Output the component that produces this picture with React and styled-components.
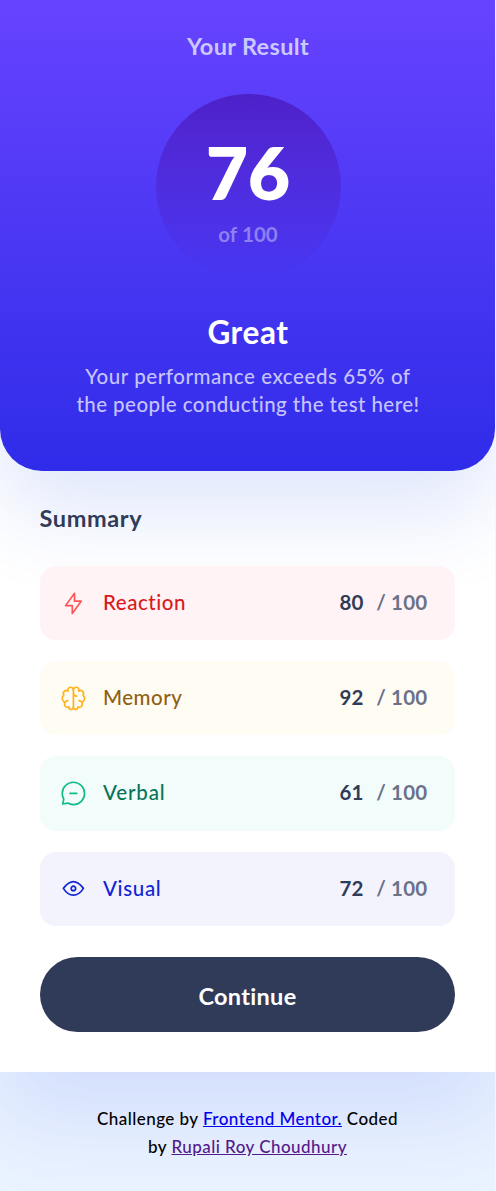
import React from "react";
import styled, { createGlobalStyle } from "styled-components";

const GlobalStyle = createGlobalStyle`
  * { box-sizing: border-box; }
  body {
    margin: 0;
    background: #f3f4ff;
    font-family: Lato, "Liberation Sans", sans-serif;
    font-variant-ligatures: none;
  }
  h1, h2, h3, p, ul { margin: 0; padding: 0; }
`;

const Page = styled.div`
  height: 1191px;
  margin-right: 1px;
  overflow: hidden;
  background: #eaf3ff;
`;

const Card = styled.main`
  height: 1071.6px;
  background: #fff;
  box-shadow: 0 42px 84px rgba(61, 88, 236, 0.14);
`;

const Result = styled.section`
  height: 471.2px;
  display: flex;
  flex-direction: column;
  align-items: center;
  padding: 31px 0 0 1px;
  border-radius: 0 0 42px 42px;
  background: linear-gradient(#6743ff, #2f2ce9);
  box-shadow: 0 42px 84px rgba(61, 108, 236, 0.16);
  text-align: center;
`;

const ResultTitle = styled.h1`
  font-size: 23.5px;
  line-height: 30px;
  font-weight: 700;
  letter-spacing: 0.35px;
  color: #cac9ff;
`;

const ScoreCircle = styled.div`
  width: 185px;
  height: 185px;
  margin-top: 33px;
  padding-top: 41px;
  border-radius: 50%;
  background: linear-gradient(#4d21c9, rgba(37, 33, 201, 0));
`;

const ScoreValue = styled.div`
  font-size: 72.5px;
  line-height: 74px;
  font-weight: 800;
  color: #fff;
`;

const ScoreTotal = styled.div`
  margin-top: 12px;
  font-size: 20.5px;
  line-height: 26px;
  font-weight: 700;
  letter-spacing: 0.1px;
  color: #8d80f3;
`;

const Verdict = styled.h2`
  margin-top: 32px;
  font-size: 31.5px;
  line-height: 42px;
  font-weight: 700;
  letter-spacing: 0.6px;
  color: #fff;
`;

const Description = styled.p`
  margin-top: 9px;
  font-size: 20.5px;
  line-height: 28px;
  font-weight: 500;
  color: #c6c3fd;
`;

const Line = styled.span`
  display: block;
  letter-spacing: ${(p) => p.$track}px;
`;

const Summary = styled.section`
  padding: 32px 39.6px 0;
`;

const SummaryTitle = styled.h2`
  font-size: 23.5px;
  line-height: 30px;
  font-weight: 700;
  letter-spacing: 0.6px;
  color: #303b59;
`;

const ScoreList = styled.ul`
  display: grid;
  gap: 21px;
  margin-top: 32.6px;
  list-style: none;
`;

const ScoreRow = styled.li`
  display: flex;
  align-items: center;
  height: 74.25px;
  padding: 0 28px 0 20.7px;
  border-radius: 16px;
  background: ${(p) => p.$background};
`;

const Icon = styled.svg`
  width: 26.8px;
  height: 26.8px;
  fill: none;
  stroke: ${(p) => p.$color};
  stroke-width: 1.25;
  stroke-linecap: round;
  stroke-linejoin: round;
`;

const Category = styled.h3`
  margin: 0 0 2px 15.9px;
  font-size: 20.5px;
  line-height: 28px;
  font-weight: 500;
  letter-spacing: ${(p) => p.$track}px;
  color: ${(p) => p.$color};
`;

const Points = styled.span`
  margin: 0 0 2px auto;
  font-size: 20.5px;
  line-height: 28px;
  font-weight: 700;
  color: #303b59;
`;

const Maximum = styled.span`
  margin: 0 0 2px 12.8px;
  font-size: 20.5px;
  line-height: 28px;
  font-weight: 700;
  letter-spacing: 0.2px;
  color: #6a7189;
`;

const ContinueButton = styled.button`
  display: block;
  width: 100%;
  height: 74.5px;
  margin-top: 31.6px;
  padding: 2px 0 0;
  border: 0;
  border-radius: 38px;
  background: #303b59;
  color: #fff;
  font: 700 23.5px/30px Lato, "Liberation Sans", sans-serif;
  letter-spacing: 0.3px;
`;

const Attribution = styled.footer`
  position: relative;
  padding-top: 33px;
  font-size: 17px;
  line-height: 28px;
  font-weight: 500;
  letter-spacing: 0.46px;
  text-align: center;
  color: #000;
`;

const Link = styled.a`
  color: ${(p) => p.$color};
  text-decoration: underline;
`;

const categories = [
  {
    name: "Reaction",
    track: 0.55,
    points: 80,
    background: "#fff3f5",
    stroke: "#ff5555",
    color: "#da1a20",
    paths: ["M10.833 8.333V2.5l-6.666 9.167h5V17.5l6.666-9.167h-5Z"],
  },
  {
    name: "Memory",
    track: 0.5,
    points: 92,
    background: "#fffcf4",
    stroke: "#ffb21e",
    color: "#8f6010",
    paths: [
      "M5.833 11.667a2.5 2.5 0 1 0 .834 4.858",
      "M3.553 13.004a3.333 3.333 0 0 1-.728-5.53m.025-.067a2.083 2.083 0 0 1 2.983-2.824m.199.054A2.083 2.083 0 1 1 10 3.75v12.917a1.667 1.667 0 0 1-3.333 0M10 5.833a2.5 2.5 0 0 0 2.5 2.5m1.667 3.334a2.5 2.5 0 1 1-.834 4.858",
      "M16.447 13.004a3.334 3.334 0 0 0 .728-5.53m-.025-.067a2.083 2.083 0 0 0-2.983-2.824M10 3.75a2.085 2.085 0 0 1 2.538-2.033 2.084 2.084 0 0 1 1.43 2.92m-.635 12.03a1.667 1.667 0 0 1-3.333 0",
    ],
  },
  {
    name: "Verbal",
    track: 0.85,
    points: 61,
    background: "#f2fcfa",
    stroke: "#12bb8b",
    color: "#087456",
    paths: [
      "M7.5 10h5M10 18.333A8.333 8.333 0 1 0 1.667 10c0 1.518.406 2.942 1.115 4.167l-.699 3.75 3.75-.699A8.295 8.295 0 0 0 10 18.333Z",
    ],
  },
  {
    name: "Visual",
    track: 0.65,
    points: 72,
    background: "#f3f3fd",
    stroke: "#1125d6",
    color: "#1125d6",
    paths: [
      "M10 11.667a1.667 1.667 0 1 0 0-3.334 1.667 1.667 0 0 0 0 3.334Z",
      "M17.5 10c-1.574 2.492-4.402 5-7.5 5s-5.926-2.508-7.5-5C4.416 7.632 6.66 5 10 5s5.584 2.632 7.5 5Z",
    ],
  },
];

export default function App() {
  return (
    <Page>
      <GlobalStyle />
      <Card>
        <Result>
          <ResultTitle>Your Result</ResultTitle>
          <ScoreCircle>
            <ScoreValue>76</ScoreValue>
            <ScoreTotal>of 100</ScoreTotal>
          </ScoreCircle>
          <Verdict>Great</Verdict>
          <Description>
            <Line $track={0.56}>Your performance exceeds 65% of</Line>
            <Line $track={0.44}>the people conducting the test here!</Line>
          </Description>
        </Result>
        <Summary>
          <SummaryTitle>Summary</SummaryTitle>
          <ScoreList>
            {categories.map((c) => (
              <ScoreRow key={c.name} $background={c.background}>
                <Icon viewBox="0 0 20 20" $color={c.stroke} aria-hidden="true">
                  {c.paths.map((d) => (
                    <path key={d} d={d} />
                  ))}
                </Icon>
                <Category $color={c.color} $track={c.track}>{c.name}</Category>
                <Points>{c.points}</Points>
                <Maximum>/ 100</Maximum>
              </ScoreRow>
            ))}
          </ScoreList>
          <ContinueButton type="button">Continue</ContinueButton>
        </Summary>
      </Card>
      <Attribution>
        Challenge by <Link href="#mentor" $color="#0000ee">Frontend Mentor.</Link> Coded
        <br />
        by <Link href="#author" $color="#551a8b">Rupali Roy Choudhury</Link>
      </Attribution>
    </Page>
  );
}
